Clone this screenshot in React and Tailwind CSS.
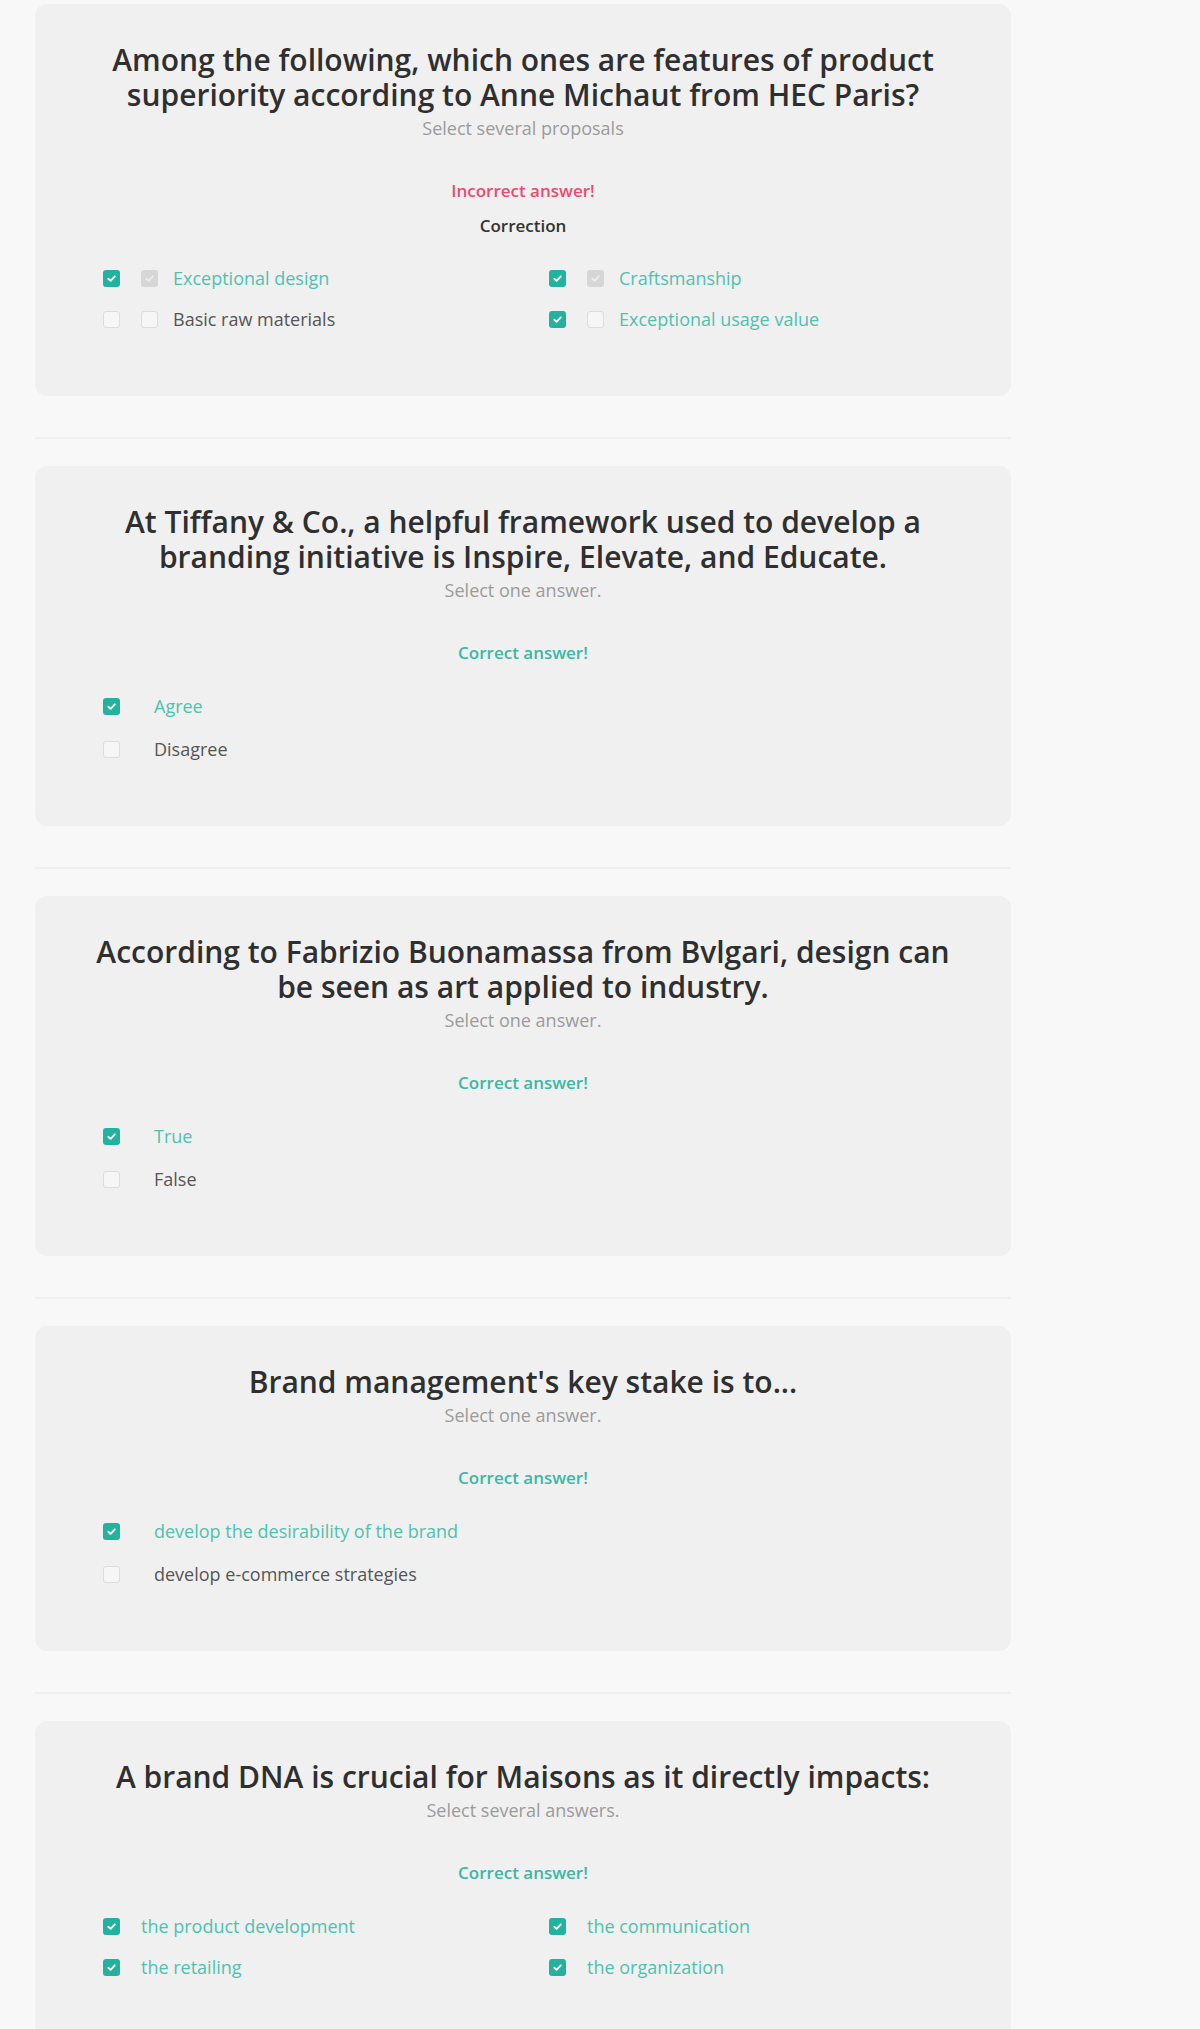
import React from 'react'

const questions = [
  {
    title: ['Among the following, which ones are features of product', 'superiority according to Anne Michaut from HEC Paris?'],
    hint: 'Select several proposals',
    correct: false,
    layout: 'double',
    options: [
      { label: 'Exceptional design', mine: true, expected: true, right: true },
      { label: 'Craftsmanship', mine: true, expected: true, right: true },
      { label: 'Basic raw materials', mine: false, expected: false, right: false },
      { label: 'Exceptional usage value', mine: true, expected: false, right: true },
    ],
  },
  {
    title: ['At Tiffany & Co., a helpful framework used to develop a', 'branding initiative is Inspire, Elevate, and Educate.'],
    hint: 'Select one answer.',
    correct: true,
    layout: 'list',
    options: [
      { label: 'Agree', mine: true },
      { label: 'Disagree', mine: false },
    ],
  },
  {
    title: ['According to Fabrizio Buonamassa from Bvlgari, design can', 'be seen as art applied to industry.'],
    hint: 'Select one answer.',
    correct: true,
    layout: 'list',
    options: [
      { label: 'True', mine: true },
      { label: 'False', mine: false },
    ],
  },
  {
    title: ["Brand management's key stake is to..."],
    hint: 'Select one answer.',
    correct: true,
    layout: 'list',
    options: [
      { label: 'develop the desirability of the brand', mine: true },
      { label: 'develop e-commerce strategies', mine: false },
    ],
  },
  {
    title: ['A brand DNA is crucial for Maisons as it directly impacts:'],
    hint: 'Select several answers.',
    correct: true,
    layout: 'grid',
    options: [
      { label: 'the product development', mine: true },
      { label: 'the communication', mine: true },
      { label: 'the retailing', mine: true },
      { label: 'the organization', mine: true },
    ],
  },
]

const Check = ({ variant }) => {
  // teal = user's pick, grey = correction, empty = not ticked
  if (variant === 'empty') {
    return <span className="block w-[17px] h-[17px] shrink-0 rounded-[3px] border border-[#dcdcdc] bg-[#f6f6f6]" />
  }
  const bg = variant === 'teal' ? 'bg-[#22b29d]' : 'bg-[#d6d6d6]'
  const stroke = variant === 'teal' ? '#ffffff' : '#ececec'
  return (
    <span className={`flex items-center justify-center w-[17px] h-[17px] shrink-0 rounded-[3px] ${bg}`}>
      <svg width="11" height="11" viewBox="0 0 12 12" fill="none">
        <path d="M2.5 6.3 L5 8.6 L9.6 3.6" stroke={stroke} strokeWidth="2" strokeLinecap="round" strokeLinejoin="round" />
      </svg>
    </span>
  )
}

const Option = ({ opt, layout }) => {
  const color = opt.mine || opt.right ? 'text-[#4fc1af]' : 'text-[#555555]'
  if (layout === 'double') {
    return (
      <div className="flex items-center h-6">
        <Check variant={opt.mine ? 'teal' : 'empty'} />
        <span className="ml-[21px]"><Check variant={opt.expected ? 'grey' : 'empty'} /></span>
        <span className={`ml-[15px] text-[18px] ${color}`}>{opt.label}</span>
      </div>
    )
  }
  return (
    <div className="flex items-center h-6">
      <Check variant={opt.mine ? 'teal' : 'empty'} />
      <span className={`${layout === 'list' ? 'ml-[34px]' : 'ml-[21px]'} text-[18px] ${color}`}>{opt.label}</span>
    </div>
  )
}

const QuestionCard = ({ q }) => (
  <div className="bg-[#f0f0f0] rounded-xl pt-[38px] pb-[65px] px-[68px]">
    <h2 className="-mx-10 text-center text-[30px] leading-[35px] font-semibold text-[#2f2f2f]">
      {q.title.map((line, i) => (
        <span key={i} className="block whitespace-nowrap">{line}</span>
      ))}
    </h2>
    <p className="mt-[6px] text-center text-[18px] leading-5 text-[#9b9b9b]">{q.hint}</p>

    {q.correct ? (
      <p className="mt-[43px] text-center text-[17px] leading-5 font-semibold text-[#3bb8a5]">Correct answer!</p>
    ) : (
      <>
        <p className="mt-[43px] text-center text-[17px] leading-5 font-semibold text-[#ec4a6e]">Incorrect answer!</p>
        <p className="mt-[15px] text-center text-[17px] leading-5 font-semibold text-[#333333]">Correction</p>
      </>
    )}

    {q.layout === 'list' ? (
      <div className="mt-[31px] flex flex-col gap-[19px]">
        {q.options.map(opt => <Option key={opt.label} opt={opt} layout="list" />)}
      </div>
    ) : (
      <div className={`${q.correct ? 'mt-[31px]' : 'mt-[30px]'} grid grid-cols-2 gap-x-[52px] gap-y-[17px]`}>
        {q.options.map(opt => <Option key={opt.label} opt={opt} layout={q.layout} />)}
      </div>
    )}
  </div>
)

export default function App() {
  return (
    <div className="min-h-screen bg-[#f8f8f8] pt-1 pl-[35px] font-['Open_Sans','Liberation_Sans',sans-serif]">
      <div className="w-[976px]">
        {questions.map((q, i) => (
          <div key={i}>
            {i > 0 && <div className="mt-[41px] mb-[27px] h-[2px] bg-[#efefef]" />}
            <QuestionCard q={q} />
          </div>
        ))}
      </div>
    </div>
  )
}
